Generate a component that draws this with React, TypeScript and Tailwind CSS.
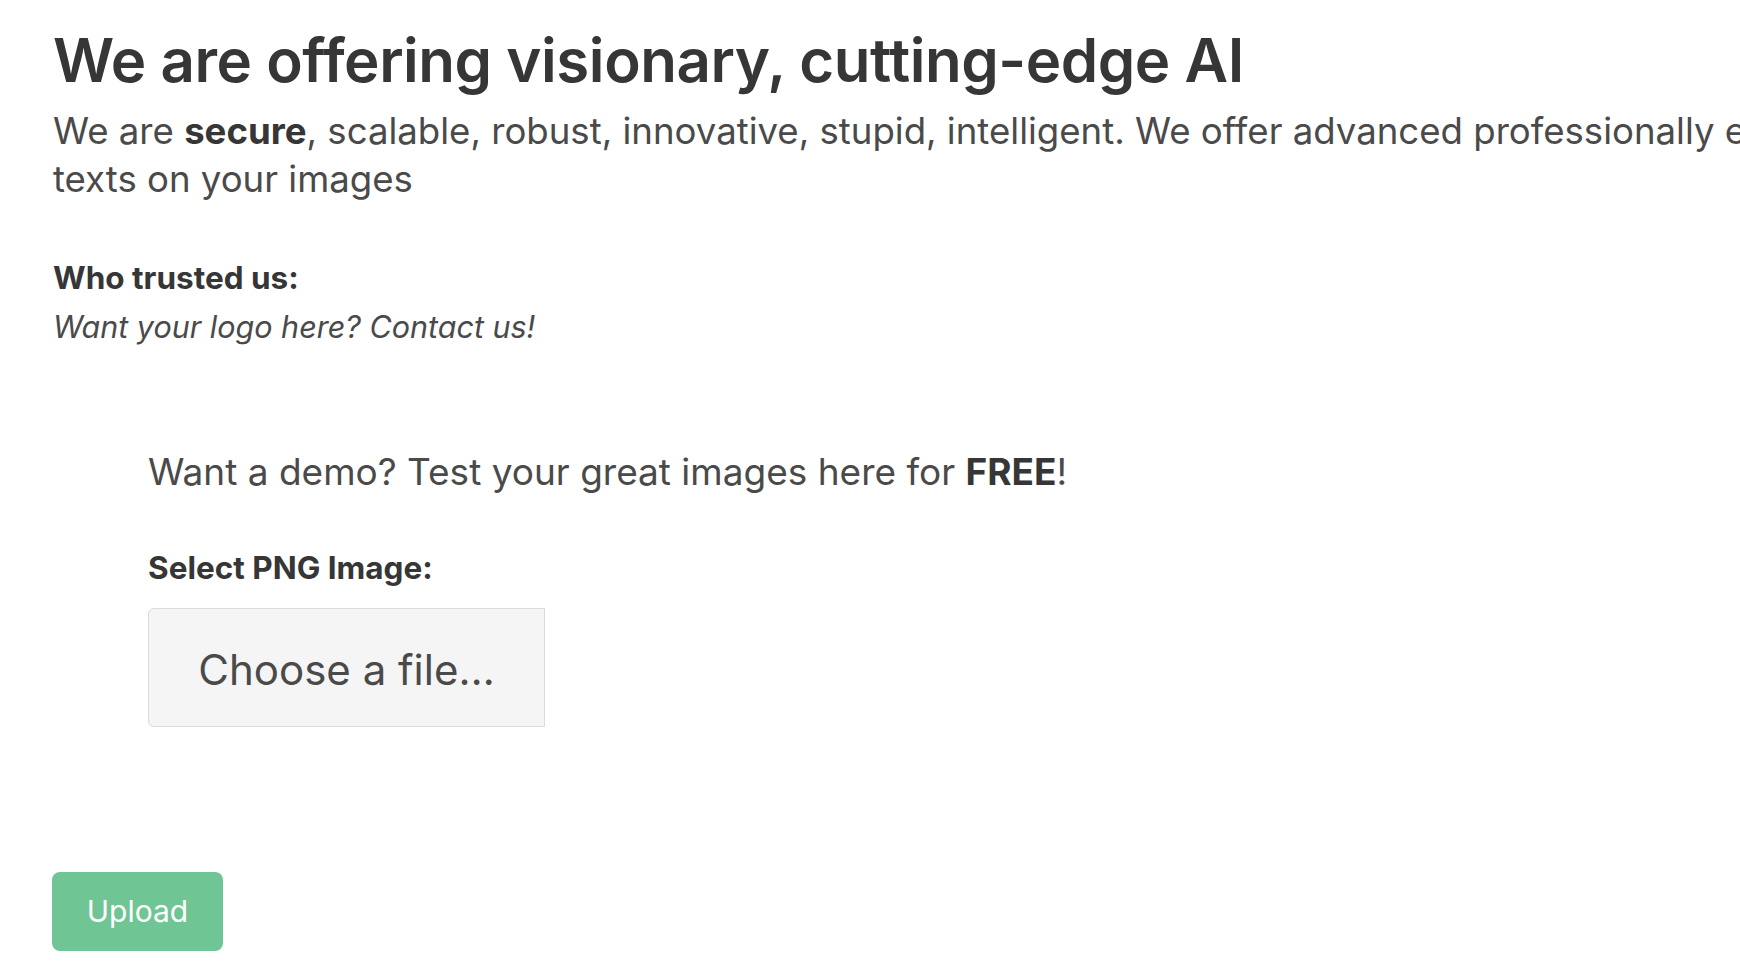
export default function App() {
  return (
    <div className="w-[1740px] h-[966px] overflow-hidden bg-white font-['Inter',_'Noto_Sans',_sans-serif]">
      <div className="pl-[53px] pt-[27px]">
        <h1 className="text-[60px] leading-[67px] font-semibold text-[#363636] whitespace-nowrap tracking-[-0.45px]">
          We are offering visionary, cutting-edge AI
        </h1>
        <p className="mt-[13px] text-[36.6px] leading-[48px] text-[#4a4a4a] whitespace-nowrap">
          We are <strong className="font-bold text-[#363636]">secure</strong>, scalable, robust, innovative, stupid,
          intelligent. We offer advanced professionally engineered
          <br />
          texts on your images
        </p>
        <div className="mt-[50px] leading-[49px] text-[#4a4a4a]">
          <p className="text-[31.5px] font-bold text-[#363636]">Who trusted us:</p>
          <p className="text-[30.5px] italic">Want your logo here? Contact us!</p>
        </div>
        <div className="mt-[97px] pl-[95px]">
          <p className="text-[37px] leading-[48px] text-[#4a4a4a] whitespace-nowrap">
            Want a demo? Test your great images here for <strong className="font-bold text-[#363636]">FREE</strong>!
          </p>
          <label className="block mt-[50px] text-[31.5px] leading-[44px] font-bold text-[#363636]">
            Select PNG Image:
          </label>
          <div className="mt-[18px] flex">
            <div className="w-[397px] h-[119px] pt-[4px] flex items-center justify-center bg-[#f5f5f5] border border-[#dbdbdb] rounded-l-[6px] text-[42px] text-[#4a4a4a]">
              Choose a file…
            </div>
          </div>
        </div>
        <button className="mt-[145px] ml-[-1px] w-[171px] h-[79px] rounded-[8px] bg-[#6fc593] text-white text-[30px] flex items-center justify-center">
          Upload
        </button>
      </div>
    </div>
  );
}
